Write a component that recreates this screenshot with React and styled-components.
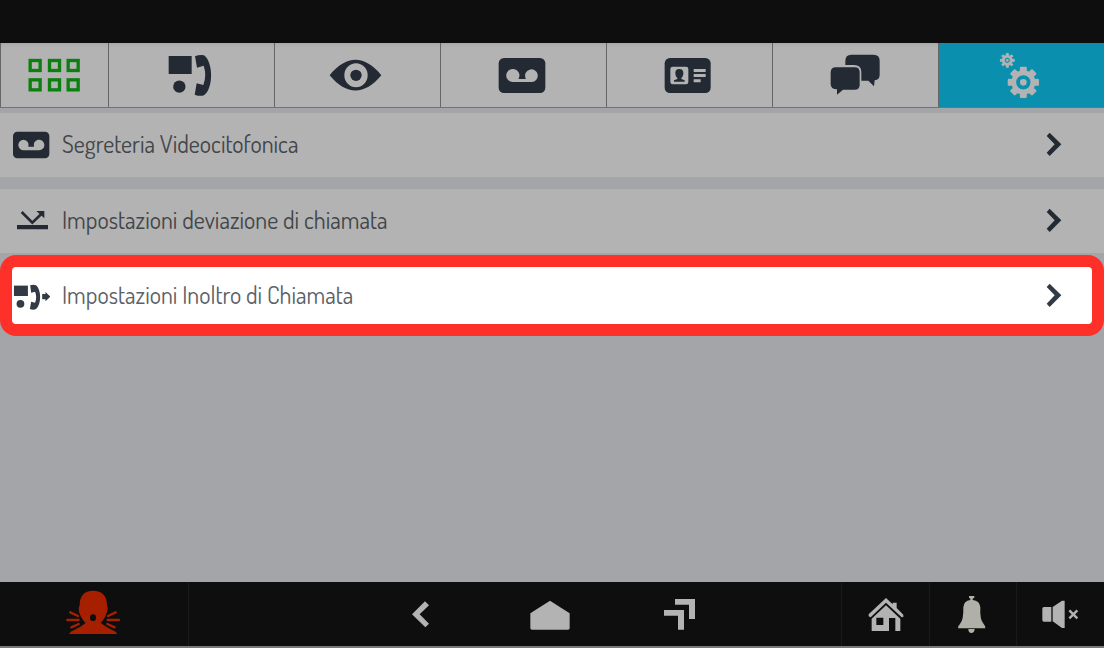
import React from "react";
import styled, { createGlobalStyle } from "styled-components";

const INK = "#232a33";
const PAPER = "#b3b3b3";

const GlobalStyle = createGlobalStyle`
  *, *::before, *::after { box-sizing: border-box; }
  body { margin: 0; background: #a4a5a9; }
  button { font: inherit; color: inherit; border: 0; padding: 0; background: none; cursor: pointer; }
  svg { display: block; flex: none; }
`;

const Screen = styled.div`
  display: flex;
  flex-direction: column;
  min-height: 100vh;
  background: #a4a5a9;
  font-family: "Dosis", "Liberation Sans Narrow", "Roboto Condensed", "Liberation Sans", sans-serif;
`;

const StatusBar = styled.header`
  height: 43px;
  background: #0e0e0e;
`;

const TabBar = styled.nav`
  display: grid;
  grid-template-columns: 108px repeat(6, 1fr);
  height: 65px;
  border-bottom: 1px solid #737373;
  background: ${PAPER};
`;

const Tab = styled.button`
  display: flex;
  align-items: center;
  justify-content: center;
  padding-right: 2px;
  border-left: 1px solid #666666;
  color: ${(p) => (p.$active ? PAPER : INK)};
  background: ${(p) => (p.$active ? "#0a8fae" : "linear-gradient(#a8a8a8, #b3b3b3 4px)")};
`;

const List = styled.ul`
  flex: 1;
  margin: 0;
  padding: 5px 0 0;
  list-style: none;
`;

const Item = styled.li`
  margin-bottom: ${(p) => (p.$tight ? 2 : 12)}px;
`;

const Row = styled.button`
  display: flex;
  align-items: center;
  gap: 12px;
  width: 100%;
  min-height: ${(p) => (p.$highlighted ? 81 : 64)}px;
  padding: ${(p) => (p.$highlighted ? "0 30px 0 0" : "0 42px 0 12px")};
  border: ${(p) => (p.$highlighted ? "12px solid #fd3129" : "0")};
  border-radius: ${(p) => (p.$highlighted ? 16 : 0)}px;
  background: ${(p) => (p.$highlighted ? "#ffffff" : PAPER)};
  color: ${(p) => (p.$highlighted ? "#323a46" : INK)};
`;

const Label = styled.span`
  flex: 1;
  padding-bottom: 2px;
  text-align: left;
  font-size: 24px;
  line-height: 32px;
  color: ${(p) => (p.$highlighted ? "#5b6166" : "#42464a")};
`;

const BottomBar = styled.footer`
  display: grid;
  grid-template-columns: 188px 1fr 88px 87px 88px;
  height: 66px;
  border-bottom: 2px solid #7c7879;
  background: #0e0e0e;
  color: ${PAPER};
`;

const BarButton = styled.button`
  display: flex;
  align-items: center;
  justify-content: center;
  padding-right: 2px;
  border-left: ${(p) => (p.$divided ? "1px solid #1a1a1a" : "0")};
  color: ${(p) => p.$tone || PAPER};
`;

const SystemKeys = styled.div`
  display: grid;
  grid-template-columns: repeat(3, 130px);
  justify-content: center;
  padding-left: 72px;
  border-left: 1px solid #1a1a1a;
`;

function Art({ box, width, height, children }) {
  return (
    <svg width={width} height={height} viewBox={box} fill="currentColor" aria-hidden="true">
      {children}
    </svg>
  );
}

function gearPath(cx, cy, outer, inner, half, hole) {
  const pts = [];
  for (let i = 0; i < 8; i++) {
    const a = (i * Math.PI) / 4;
    [[-half * 1.3, inner], [-half, outer], [half, outer], [half * 1.3, inner]].forEach(([t, r]) => {
      pts.push(`${(cx + r * Math.cos(a + t)).toFixed(1)} ${(cy + r * Math.sin(a + t)).toFixed(1)}`);
    });
  }
  return `M${pts.join("L")}ZM${cx - hole} ${cy}a${hole} ${hole} 0 1 0 ${2 * hole} 0a${hole} ${hole} 0 1 0 ${-2 * hole} 0Z`;
}

const tabs = [
  {
    name: "Menu",
    box: "73 36 180 162",
    art: (
      <g fill="none" stroke="#0b800f" strokeWidth="10">
        {[91.5, 149.5, 205.5].map((x) =>
          [73.5, 131.5].map((y) => <rect key={`${x}-${y}`} x={x} y={y} width="30" height="30" />)
        )}
      </g>
    ),
  },
  {
    name: "Chiamate",
    box: "484 36 180 162",
    art: (
      <>
        <path d="M507 60h69v54h-69z" />
        <circle cx="539" cy="152" r="18.5" />
        <path d="M586 61Q600 55 613 58C641 78 642 158 613 178Q600 182 585 176L591 142L611 147Q622 118 612 89L592 95Z" />
      </>
    ),
  },
  {
    name: "Visualizza",
    box: "172 36 180 162",
    art: (
      <>
        <path fillRule="evenodd" d="M180 118C230 56 285 56 335 118C285 179 230 179 180 118ZM224 118a35 36 0 1 0 70 0a35 36 0 1 0 -70 0Z" />
        <circle cx="259" cy="118" r="17" />
      </>
    ),
  },
  {
    name: "Segreteria",
    box: "670 36 180 162",
    art: (
      <>
        <rect x="687" y="66" width="140" height="105" rx="16" />
        <path fill={PAPER} d="M729 99a19 19 0 0 1 18 28v2h21v-2a19 19 0 1 1 18 11H729a19 19 0 0 1 0-39Z" />
      </>
    ),
  },
  {
    name: "Contatti",
    box: "178 36 180 162",
    art: (
      <>
        <rect x="195" y="66" width="138" height="105" rx="16" />
        <rect x="212" y="92" width="54" height="53" rx="7" fill={PAPER} />
        <path d="M239 99c9 0 13 6 12 14c-1 7-3 10-6 13v3l10 4v4h-32v-4l10-4v-3c-3-3-5-6-6-13c-1-8 3-14 12-14Z" />
        <path fill={PAPER} d="M282 99h36v9h-36zM282 114h36v9h-36zM282 130h21v9h-21z" />
      </>
    ),
  },
  {
    name: "Messaggi",
    box: "676 36 180 162",
    art: (
      <>
        <path d="M755 56h67q18 0 18 18v42q0 15-15 17l-2 18l-17-17h-21v-26q0-21-22-21h-26v-12q0-19 18-19Z" />
        <path d="M709 94h56q15 0 15 15v37q0 15-15 15h-35l-18 15v-16q-19 0-19-16v-34q0-16 16-16Z" />
      </>
    ),
  },
  {
    name: "Impostazioni",
    box: "274 36 180 162",
    active: true,
    art: (
      <>
        <path fillRule="evenodd" stroke="currentColor" strokeWidth="3" strokeLinejoin="round" d={gearPath(323, 73, 21, 15, 0.15, 9)} />
        <circle cx="323" cy="73" r="4" />
        <path fillRule="evenodd" stroke="currentColor" strokeWidth="7" strokeLinejoin="round" d={gearPath(371, 139, 44, 33, 0.16, 25)} />
        <circle cx="371" cy="139" r="10" />
      </>
    ),
  },
];

const rows = [
  {
    text: "Segreteria Videocitofonica",
    box: "36 61 114 90",
    art: (
      <>
        <rect x="39" y="66" width="109" height="80" rx="13" />
        <path fill={PAPER} d="M71 90a16 16 0 0 1 14 21h17a16 16 0 1 1 15 11H71a16 16 0 0 1 0-32Z" />
      </>
    ),
  },
  {
    text: "Impostazioni deviazione di chiamata",
    box: "36 288 114 90",
    tight: true,
    art: (
      <>
        <path d="M51 345h93v13H51zM109 303h24v22z" />
        <path fill="none" stroke="currentColor" strokeWidth="8" d="M65 306L97 338L127 309" />
      </>
    ),
  },
  {
    text: "Impostazioni Inoltro di Chiamata",
    box: "36 106 117 90",
    highlighted: true,
    art: (
      <>
        <path d="M42 119h43v32H42z" />
        <circle cx="62" cy="175" r="12" />
        <path d="M92 118q10-3 18 0c17 13 17 60 0 73q-8 4-19 0l4-22l12 3q7-18 0-34l-12 3Z" />
        <path d="M129 145h10v-6l15 14l-15 14v-6h-10z" />
      </>
    ),
  },
];

export default function App() {
  return (
    <Screen>
      <GlobalStyle />
      <StatusBar />
      <TabBar aria-label="Sezioni">
        {tabs.map((t) => (
          <Tab key={t.name} type="button" aria-label={t.name} $active={t.active}>
            <Art width="60" height="54" box={t.box}>{t.art}</Art>
          </Tab>
        ))}
      </TabBar>
      <List>
        {rows.map((r) => (
          <Item key={r.text} $tight={r.tight}>
            <Row type="button" $highlighted={r.highlighted}>
              <Art width="38" height="30" box={r.box}>{r.art}</Art>
              <Label $highlighted={r.highlighted}>{r.text}</Label>
              <Art width="16" height="26" box="258 66 48 78">
                <path d="M269 68L304 103L269 138L260 128L284 103L260 78Z" />
              </Art>
            </Row>
          </Item>
        ))}
      </List>
      <BottomBar>
        <BarButton type="button" aria-label="Allarme" $tone="#a62000">
          <Art width="60" height="54" box="192 36 180 162">
            <path fillRule="evenodd" d="M282 47C309 47 324 62 324 91Q328 98 325 108Q318 133 305 143Q320 156 350 170L355 177H210L215 170Q246 156 260 143Q247 133 240 110Q237 98 242 91C242 62 256 47 282 47ZM273 128a9 10 0 1 0 18 0a9 10 0 1 0 -18 0Z" />
            <path fill="none" stroke="currentColor" strokeWidth="7" strokeLinecap="round" d="M214 112L237 123M205 135H239M217 157L239 147M350 112L327 123M326 135H360M347 157L325 147" />
          </Art>
        </BarButton>
        <SystemKeys>
          <BarButton type="button" aria-label="Indietro">
            <Art width="60" height="54" box="0 36 180 162">
              <path d="M105 79L117 91L89 118L117 146L106 157L66 118Z" />
            </Art>
          </BarButton>
          <BarButton type="button" aria-label="Home">
            <Art width="60" height="54" box="390 36 180 162">
              <path d="M480 77L539 115V159Q539 164 534 164H426Q421 164 421 159V115Z" />
            </Art>
          </BarButton>
          <BarButton type="button" aria-label="Recenti">
            <Art width="60" height="54" box="780 36 180 162">
              <path d="M855 72h60v60h-18V89h-42zM822 105h60v59h-18v-42h-42z" />
            </Art>
          </BarButton>
        </SystemKeys>
        <BarButton type="button" aria-label="Casa" $divided>
          <Art width="60" height="54" box="76 36 180 162">
            <path d="M169 69L189 88V83H201V99L221 119V126L216 127L169 83L123 127L117 124V118Z" />
            <path fillRule="evenodd" d="M169 91L212 131V168H197V129H178V168H126V131ZM140 128V150H161V128Z" />
          </Art>
        </BarButton>
        <BarButton type="button" aria-label="Suoneria" $tone="#b0b0a8" $divided>
          <Art width="60" height="54" box="338 36 180 162">
            <path d="M419 63h16v5l-5 3v4q22 3 23 22q-2 38 10 50q6 6 5 13h-82q-1-7 6-13q11-12 10-50q1-19 21-22v-4l-4-3ZM417 162h19q-1 12-10 12t-9-12Z" />
          </Art>
        </BarButton>
        <BarButton type="button" aria-label="Audio disattivato" $divided>
          <Art width="60" height="54" box="600 36 180 162">
            <path d="M642 96h22v44h-22q-5 0-5-5v-34q0-5 5-5ZM668 96L696 77H704V159H696L668 139Z" />
            <path fill="none" stroke="currentColor" strokeWidth="7" d="M718 106L742 130M742 106L718 130" />
          </Art>
        </BarButton>
      </BottomBar>
    </Screen>
  );
}
